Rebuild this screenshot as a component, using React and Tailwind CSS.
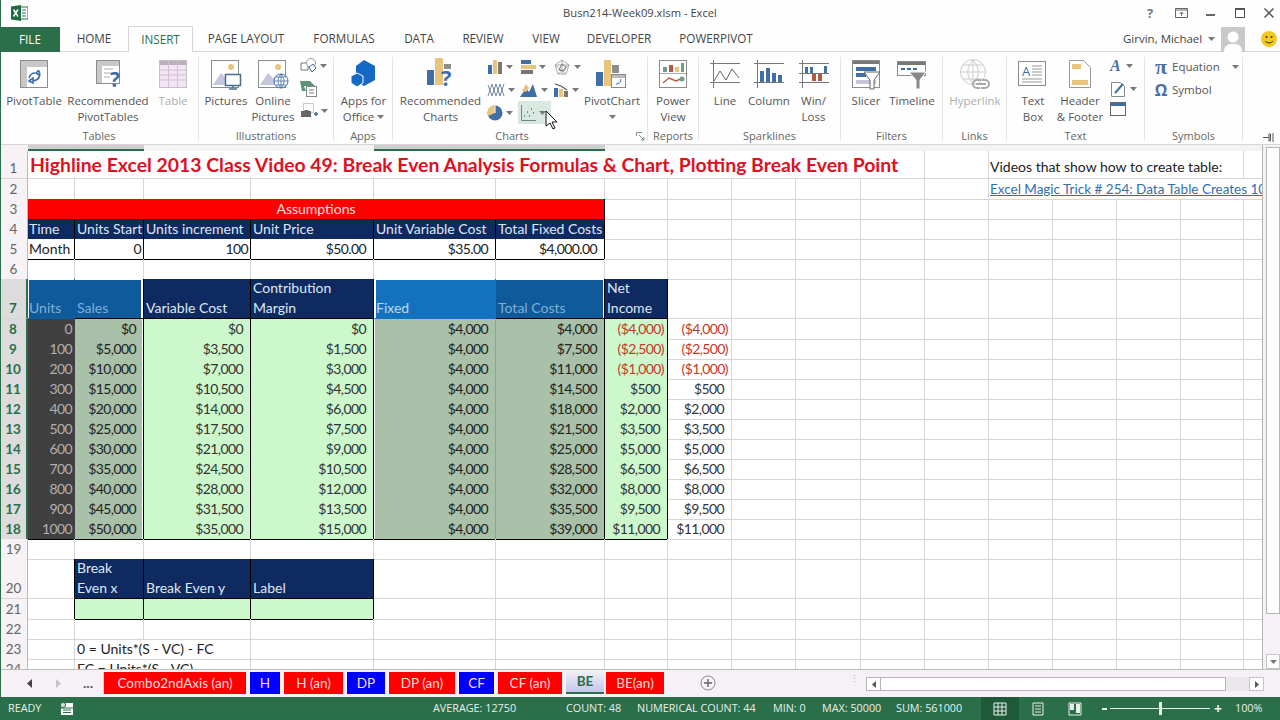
import React from 'react';

const COLS = "grid grid-cols-[28px_47px_69px_107px_123px_122px_109px_63px_64px_64px_65px_64px_64px_64px_64px_64px_63px_19px]";
const BLUE = '#3f6ea8';
const GOLD = '#e8c47c';

const Caret = ({ className = '' }) => (
  <svg width="7" height="4" viewBox="0 0 7 4" className={className}><path d="M0 0h7L3.5 4z" fill="#777" /></svg>
);

// ---------- ribbon icons ----------
const Ico = ({ w = 32, h = 32, children }) => (
  <svg width={w} height={h} viewBox={`0 0 ${w} ${h}`} fill="none">{children}</svg>
);

const PivotIcon = () => (
  <Ico>
    <rect x="2.5" y="2.5" width="27" height="27" fill="#fff" stroke="#8c8c8c" />
    <path d="M3 3h26v6H3zM3 3h6v26H3z" fill="#c8c8c8" />
    <path d="M21 13c2 5 0 9-6 10M11 23l4-3v5zM17 15c-3 0-5 2-6 5M21 12l-3 3 3 2" stroke={BLUE} strokeWidth="1.6" />
  </Ico>
);
const RecPivotIcon = () => (
  <Ico>
    <rect x="4.5" y="2.5" width="23" height="23" fill="#fff" stroke="#8c8c8c" />
    <path d="M5 3h22v5H5zM5 3h5v22H5z" fill="#c8c8c8" />
    <path d="M12 11h9M12 15h6M12 19h6" stroke="#aaa" />
    <text x="18" y="29" fontSize="21" fontWeight="700" fill={BLUE} fontFamily="Open Sans, sans-serif">?</text>
  </Ico>
);
const TableIcon = () => (
  <Ico>
    <rect x="2.5" y="2.5" width="27" height="27" fill="#f3e6f3" stroke="#c9bcc9" />
    <path d="M3 3h26v4H3z" fill="#b9b0b9" />
    <path d="M3 12h26M3 17h26M3 22h26M11.5 3v26M20.5 3v26" stroke="#d7bcd7" />
  </Ico>
);
const PictureBase = ({ children }) => (
  <Ico>
    <rect x="1.5" y="2.5" width="27" height="27" fill="#fff" stroke="#8c8c8c" />
    <circle cx="21" cy="9" r="3" fill={GOLD} />
    <path d="M3 27l8-12 5 5 3-2 6 9z" fill="#c4c6dd" />
    {children}
  </Ico>
);
const PicturesIcon = () => (
  <PictureBase>
    <rect x="15.5" y="16.5" width="15" height="11" fill="#fff" stroke="#4a6e8a" strokeWidth="1.5" />
    <path d="M23 28v2M19 31h8" stroke="#4a6e8a" strokeWidth="1.5" />
  </PictureBase>
);
const OnlinePicturesIcon = () => (
  <PictureBase>
    <circle cx="24" cy="23" r="7" fill="#fff" stroke={BLUE} />
    <path d="M17 23h14M24 16v14M19 19h10M19 27h10M24 16c-4 4-4 10 0 14M24 16c4 4 4 10 0 14" stroke={BLUE} strokeWidth=".8" />
  </PictureBase>
);
const ShapesIcon = () => (
  <Ico w={17} h={16}>
    <path d="M1 5h7v7H1z" stroke="#777" fill="#fff" />
    <circle cx="11" cy="5" r="4.5" stroke="#999" fill="#fff" />
    <path d="M9 9l4-3 3 4-4 4z" stroke={BLUE} fill="#fff" />
  </Ico>
);
const SmartArtIcon = () => (
  <Ico w={17} h={17}>
    <path d="M0 1h10l5 5H4l2 5H2z" fill="#5c9277" />
    <rect x="6.5" y="6.5" width="10" height="10" fill="#fff" stroke="#888" />
    <path d="M9 10h5M9 13h5" stroke="#777" />
  </Ico>
);
const ScreenshotIcon = () => (
  <Ico w={18} h={16}>
    <rect x="3.5" y=".5" width="10" height="9" stroke="#999" strokeDasharray="1 1" />
    <path d="M1 8h3l1-1h3l1 1h2v6H1z" fill="#666" />
    <path d="M14 11h4M16 9v4" stroke={BLUE} strokeWidth="1.6" />
  </Ico>
);
const AppsIcon = () => (
  <Ico w={28} h={28}>
    <path d="M14 0l11 6v14l-11 6-2-1v-9l-6-3V6z" fill="#1469c7" />
    <path d="M7 13l6 3v7l-6 4-6-4v-7z" fill="#1469c7" stroke="#fff" />
  </Ico>
);
const RecChartsIcon = () => (
  <Ico w={30} h={34}>
    <rect x="1" y="13" width="7" height="15" fill={BLUE} />
    <rect x="9" y="1" width="8" height="27" fill={GOLD} />
    <rect x="18" y="7" width="7" height="5" fill="#8e8e8e" />
    <text x="15" y="29" fontSize="22" fontWeight="700" fill={BLUE} fontFamily="Open Sans, sans-serif">?</text>
  </Ico>
);
const PivotChartIcon = () => (
  <Ico w={32} h={32}>
    <rect x="0" y="14" width="7" height="14" fill={BLUE} />
    <rect x="8" y="2" width="7" height="26" fill={GOLD} />
    <rect x="16" y="7" width="7" height="8" fill="#8e8e8e" />
    <rect x="15.5" y="16.5" width="14" height="13" fill="#fff" stroke="#888" />
    <path d="M16 17h13v3H16z" fill="#bbb" />
    <path d="M25 21c0 3-2 5-5 5" stroke={BLUE} />
  </Ico>
);
const PowerViewIcon = () => (
  <Ico>
    <rect x="2.5" y="2.5" width="27" height="27" fill="#fff" stroke="#8c8c8c" />
    <path d="M3 15.5h26" stroke="#aaa" />
    <rect x="6" y="9" width="4" height="5" fill="#6f9c8a" />
    <rect x="12" y="7" width="4" height="7" fill="#b35a45" />
    <rect x="18" y="9" width="4" height="5" fill={GOLD} />
    <rect x="24" y="5" width="3" height="9" fill="#6f9c8a" />
    <path d="M6 25l6-5 7 3 7-3" stroke="#b35a45" strokeWidth="1.4" />
    <circle cx="25" cy="21" r="2.5" fill="#6f9c8a" />
  </Ico>
);
const SparkFrame = ({ children }) => (
  <Ico w={32} h={30}>
    <path d="M1 4.5h30M1 23.5h30M4.5 1v28" stroke="#777" />
    {children}
  </Ico>
);
const SparkLine = () => (
  <SparkFrame><path d="M5 22l6-10 6 9 6-11 7 9" stroke="#666" /></SparkFrame>
);
const SparkColumn = () => (
  <SparkFrame>
    <rect x="7" y="12" width="4" height="11" fill={BLUE} />
    <rect x="13" y="9" width="4" height="14" fill={BLUE} />
    <rect x="19" y="14" width="4" height="9" fill={BLUE} />
    <rect x="25" y="16" width="4" height="7" fill={BLUE} />
  </SparkFrame>
);
const SparkWin = () => (
  <Ico w={32} h={30}>
    <path d="M1 4.5h30M1 23.5h30M4.5 1v28M1 14.5h30" stroke="#777" />
    <rect x="7" y="8" width="3" height="6" fill={BLUE} />
    <rect x="12" y="8" width="3" height="6" fill={BLUE} />
    <rect x="14" y="15" width="4" height="7" fill="#b35a45" />
    <rect x="20" y="15" width="4" height="7" fill="#b35a45" />
    <rect x="26" y="7" width="3" height="7" fill={BLUE} />
  </Ico>
);
const SlicerIcon = () => (
  <Ico>
    <rect x="2.5" y="2.5" width="27" height="27" fill="#fff" stroke="#8c8c8c" />
    <path d="M3 3h26v3H3z" fill="#777" />
    <rect x="6" y="9" width="20" height="4" fill={BLUE} />
    <rect x="6" y="15" width="10" height="4" fill={BLUE} />
    <rect x="6" y="22" width="20" height="4" fill="#c4c6dd" />
    <path d="M14 14h16l-6 8v9h-4v-9z" fill="#fff" stroke="#666" />
  </Ico>
);
const TimelineIcon = () => (
  <Ico>
    <rect x="1.5" y="3.5" width="28" height="14" fill="#fff" stroke="#8c8c8c" />
    <path d="M2 4h27v3H2z" fill="#777" />
    <path d="M5 11h4M11 11h4M17 11h4" stroke={BLUE} strokeWidth="2" />
    <path d="M13 14h17l-6 8v9h-4v-9z" fill="#888" stroke="#fff" />
  </Ico>
);
const HyperlinkIcon = () => (
  <Ico w={34} h={32}>
    <circle cx="15" cy="14" r="12.5" stroke="#ccc" />
    <path d="M3 14h24M15 2v24M5 7h20M5 21h20M15 2c-7 7-7 17 0 24M15 2c7 7 7 17 0 24" stroke="#ccc" />
    <path d="M18 26h10M22 30h-3a4 4 0 010-8h4M24 22h3a4 4 0 010 8h-4" stroke="#aaa" strokeWidth="2" />
  </Ico>
);
const TextBoxIcon = () => (
  <Ico>
    <rect x="1.5" y="3.5" width="27" height="24" fill="#fff" stroke="#8c8c8c" />
    <text x="5" y="18" fontSize="13" fill={BLUE} fontFamily="Open Sans, sans-serif">A</text>
    <path d="M15 8h10M15 11h10M15 14h10M15 17h10M5 21h20M5 24h20" stroke="#999" />
  </Ico>
);
const HeaderIcon = () => (
  <Ico w={24} h={30}>
    <path d="M1.5 1.5h14l7 7v20h-21z" fill="#fff" stroke="#999" />
    <rect x="4" y="5" width="9" height="5" fill={GOLD} />
    <rect x="4" y="21" width="16" height="5" fill={GOLD} />
  </Ico>
);

const chartIcons = {
  column: <Ico w={16} h={16}><rect x="1" y="6" width="4" height="9" fill={BLUE} /><rect x="6" y="1" width="4" height="14" fill={GOLD} /><rect x="11" y="3" width="4" height="12" fill="#777" /></Ico>,
  bar: <Ico w={16} h={16}><rect x="1" y="1" width="10" height="4" fill={BLUE} /><rect x="1" y="6" width="15" height="4" fill={GOLD} /><rect x="1" y="11" width="12" height="4" fill="#777" /></Ico>,
  radar: <Ico w={18} h={16}><path d="M9 1l7 5-3 9H5L2 6zM9 1v14M2 6l14 0M5 15l11-9M13 15L2 6" stroke="#999" strokeWidth=".8" /><path d="M9 5l4 3-2 4-5-1z" stroke="#777" /></Ico>,
  line: <Ico w={18} h={16}><path d="M1 14L5 2l4 12 4-12 4 12" stroke="#888" /><path d="M1 3l4 11 4-12 4 12 4-12" stroke={BLUE} strokeWidth=".8" /></Ico>,
  area: <Ico w={18} h={16}><path d="M0 15l6-9 3 4 4-8 4 13z" fill={BLUE} /><path d="M2 9l4-7 3 4-3 4z" fill={GOLD} /></Ico>,
  combo: <Ico w={16} h={16}><rect x="1" y="6" width="4" height="9" fill={BLUE} /><rect x="6" y="7" width="4" height="8" fill={GOLD} /><rect x="11" y="9" width="4" height="6" fill="#777" /><path d="M2 2l6 2 6 4" stroke="#555" strokeWidth="1.2" /></Ico>,
  pie: <Ico w={16} h={16}><circle cx="8" cy="8" r="7.5" fill={BLUE} /><path d="M8 8V.5A7.5 7.5 0 001 11z" fill={GOLD} /><path d="M8 8V.5" stroke="#fff" /></Ico>,
  scatter: <Ico w={16} h={16}><path d="M1.5 0v15.5H16" stroke="#6a8a7c" /><path d="M4 11h1M7 7h1M9 11h1M11 4h1M13 8h1" stroke="#3f6e8a" strokeWidth="1.4" /></Ico>,
};

// ---------- ribbon pieces ----------
const Big = ({ w, icon, lines, caret, grey }) => (
  <div className={`${w} flex flex-col items-center shrink-0`}>
    <div className="h-[32px] w-full flex items-center justify-center">{icon}</div>
    <div className={`mt-[3px] text-center leading-4 text-[11.5px] whitespace-nowrap ${grey ? 'text-[#aeaeae]' : 'text-[#555]'}`}>
      {lines.map((l, i) => (
        <div key={i} className="flex items-center justify-center gap-[3px] h-4">
          {l}
          {caret && i === lines.length - 1 && <Caret />}
        </div>
      ))}
    </div>
  </div>
);

const Group = ({ w, label, labelClass = '', children }) => (
  <div className={`${w} h-[84px] shrink-0 border-r border-[#e4e4e4] flex flex-col`}>
    <div className="h-[71px] shrink-0 pt-[1px] flex">{children}</div>
    <div className={`h-4 text-center text-[11px] leading-4 text-[#666] ${labelClass}`}>{label}</div>
  </div>
);

const SmallChart = ({ icon, active }) => (
  <div className={`w-[33px] h-[23px] flex items-center gap-[3px] pl-[2px] ${active ? 'bg-[#d9e9e2]' : ''}`}>
    {icon}
    <Caret />
  </div>
);

const Ribbon = () => (
  <div className="h-[93px] bg-[#fefefe] border-b border-[#d6d6d6] flex pt-[5px] text-[#555] relative">
    <Group w="w-[199px]" label="Tables">
      <Big w="w-[68px]" icon={<PivotIcon />} lines={['PivotTable']} />
      <Big w="w-[80px]" icon={<RecPivotIcon />} lines={['Recommended', 'PivotTables']} />
      <Big w="w-[50px]" icon={<TableIcon />} lines={['Table']} grey />
    </Group>
    <Group w="w-[135px]" label="Illustrations">
      <Big w="w-[54px]" icon={<PicturesIcon />} lines={['Pictures']} />
      <Big w="w-[40px]" icon={<OnlinePicturesIcon />} lines={['Online', 'Pictures']} />
      <div className="flex flex-col gap-[5px] pl-[7px]">
        <div className="flex items-center gap-[3px] h-[16px]"><ShapesIcon /><Caret /></div>
        <div className="flex items-center gap-[3px] h-[18px]"><SmartArtIcon /></div>
        <div className="flex items-center gap-[3px] h-[17px]"><ScreenshotIcon /><Caret /></div>
      </div>
    </Group>
    <Group w="w-[59px]" label="Apps">
      <Big w="w-[59px]" icon={<AppsIcon />} lines={['Apps for', 'Office']} caret />
    </Group>
    <Group w="w-[255px]" label="Charts" labelClass="pr-[16px]">
      <Big w="w-[95px]" icon={<RecChartsIcon />} lines={['Recommended', 'Charts']} />
      <div className="w-[99px] -ml-[3px] -mt-[3px] grid grid-cols-3 content-start">
        <SmallChart icon={chartIcons.column} />
        <SmallChart icon={chartIcons.bar} />
        <SmallChart icon={chartIcons.radar} />
        <SmallChart icon={chartIcons.line} />
        <SmallChart icon={chartIcons.area} />
        <SmallChart icon={chartIcons.combo} />
        <SmallChart icon={chartIcons.pie} />
        <SmallChart icon={chartIcons.scatter} active />
      </div>
      <Big w="w-[56px]" icon={<PivotChartIcon />} lines={['PivotChart', <Caret key="c" />]} />
    </Group>
    <Group w="w-[51px]" label="Reports">
      <Big w="w-[50px]" icon={<PowerViewIcon />} lines={['Power', 'View']} />
    </Group>
    <Group w="w-[142px]" label="Sparklines">
      <Big w="w-[52px]" icon={<SparkLine />} lines={['Line']} />
      <Big w="w-[36px]" icon={<SparkColumn />} lines={['Column']} />
      <Big w="w-[53px]" icon={<SparkWin />} lines={['Win/', 'Loss']} />
    </Group>
    <Group w="w-[102px]" label="Filters">
      <Big w="w-[50px]" icon={<SlicerIcon />} lines={['Slicer']} />
      <Big w="w-[42px]" icon={<TimelineIcon />} lines={['Timeline']} />
    </Group>
    <Group w="w-[64px]" label="Links">
      <Big w="w-[64px]" icon={<HyperlinkIcon />} lines={['Hyperlink']} grey />
    </Group>
    <Group w="w-[138px]" label="Text">
      <Big w="w-[52px]" icon={<TextBoxIcon />} lines={['Text', 'Box']} />
      <Big w="w-[42px]" icon={<HeaderIcon />} lines={['Header', '& Footer']} />
      <div className="flex flex-col pl-[9px] gap-[3px] -mt-[2px]">
        <div className="flex items-center gap-[5px] h-[20px]">
          <span className="text-[16px] font-bold italic text-[#4c6fa5] font-['Liberation_Serif',serif]">A</span><Caret />
        </div>
        <div className="flex items-center gap-[3px] h-[20px]">
          <Ico w={17} h={17}><path d="M1.5 1.5h9l4 4v10h-13z" fill="#fff" stroke="#888" /><path d="M5 12l8-9" stroke={BLUE} strokeWidth="2" /></Ico><Caret />
        </div>
        <Ico w={17} h={15}><rect x=".5" y=".5" width="15" height="13" fill="#fff" stroke="#666" /><path d="M1 1h14v3H1z" fill={BLUE} /></Ico>
      </div>
    </Group>
    <Group w="w-[98px]" label="Symbols">
      <div className="pl-[9px] -mt-[3px] text-[11.5px] leading-[23px] text-[#555]">
        <div className="flex items-center gap-[4px] whitespace-nowrap h-[23px]">
          <span className="w-[14px] text-center text-[22px] leading-none text-[#4c6fa5] font-['Liberation_Serif',serif] font-bold">π</span>Equation
          <Caret className="ml-[8px]" />
        </div>
        <div className="flex items-center gap-[4px] h-[23px]">
          <span className="w-[14px] text-center text-[16px] leading-none text-[#4c6fa5] font-bold">Ω</span>Symbol
        </div>
      </div>
    </Group>
    {/* dialog launcher + pin */}
    <svg className="absolute left-[636px] top-[80px]" width="9" height="9" viewBox="0 0 9 9" fill="none"><path d="M.5 4V.5H6M3 3l5 5M8 5v3H5" stroke="#888" /></svg>
    <svg className="absolute left-[1263px] top-[81px]" width="11" height="9" viewBox="0 0 11 9" fill="none"><path d="M0 4.5h6M6 1v7h1.5V1zM10 0v9" stroke="#555" /></svg>
  </div>
);

// ---------- sheet ----------
const NAVY = 'bg-[#0f2a60] text-[#dfe8f5] border-black';
const TBL = 'bg-white text-[#222] border-black';
const GREEN = 'bg-[#ccf8cc] text-[#333] border-black';
const SAGE = 'bg-[#a9c1a9] text-[#222] border-black';
const UNDER = 'border-[#d6d6d6] border-b-black';
const EDGE = 'border-[#d6d6d6] border-r-black';

const c = (t, cls = '', extra = {}) => ({ t, cls, ...extra });
// numbers: Lato's digits run wider than the sheet font's
const R2 = 'justify-end pr-[2px] tracking-[-0.6px]';
const R7 = 'justify-end pr-[7px] tracking-[-0.6px]';
const R3 = 'justify-end pr-[3px] tracking-[-0.6px]';

const Row = ({ n, h = 'h-5', sel, cells = [] }) => {
  const used = cells.reduce((s, x) => s + (x.span || 1), 0);
  const blanks = Array.from({ length: Math.max(0, 17 - used) }, () => c(''));
  return (
    <div className={`${COLS} ${h}`}>
      <div className={`flex items-end justify-center leading-5 text-[13.5px] border-b border-[#d6d6d6] ${sel ? 'bg-[#dcdcdc] text-[#2a6e4a] font-bold border-r-2 border-r-[#2a6e4a]' : 'bg-[#f6f2f6] text-[#666] border-r border-r-[#b9b9b9]'}`}>{n}</div>
      {[...cells, ...blanks].map((x, i) => (
        <div
          key={i}
          className={`flex items-end whitespace-pre-line leading-5 overflow-hidden border-r border-b ${x.cls.includes('border-') ? '' : 'border-[#d6d6d6]'} ${x.cls.includes('justify') || x.cls.includes('pl-[') ? '' : 'pl-[2px]'} ${x.cls} ${x.span === 2 ? 'col-span-2' : ''} ${x.span === 4 ? 'col-span-4' : ''} ${x.span === 5 ? 'col-span-5' : ''} ${x.span === 6 ? 'col-span-6' : ''} ${x.span === 11 ? 'col-span-11' : ''}`}
        >
          {x.t}
        </div>
      ))}
    </div>
  );
};

const DATA = [
  [8, '0', '$0', '$0', '$0', '$4,000', '$4,000', '($4,000)', '($4,000)'],
  [9, '100', '$5,000', '$3,500', '$1,500', '$4,000', '$7,500', '($2,500)', '($2,500)'],
  [10, '200', '$10,000', '$7,000', '$3,000', '$4,000', '$11,000', '($1,000)', '($1,000)'],
  [11, '300', '$15,000', '$10,500', '$4,500', '$4,000', '$14,500', '$500', '$500'],
  [12, '400', '$20,000', '$14,000', '$6,000', '$4,000', '$18,000', '$2,000', '$2,000'],
  [13, '500', '$25,000', '$17,500', '$7,500', '$4,000', '$21,500', '$3,500', '$3,500'],
  [14, '600', '$30,000', '$21,000', '$9,000', '$4,000', '$25,000', '$5,000', '$5,000'],
  [15, '700', '$35,000', '$24,500', '$10,500', '$4,000', '$28,500', '$6,500', '$6,500'],
  [16, '800', '$40,000', '$28,000', '$12,000', '$4,000', '$32,000', '$8,000', '$8,000'],
  [17, '900', '$45,000', '$31,500', '$13,500', '$4,000', '$35,500', '$9,500', '$9,500'],
  [18, '1000', '$50,000', '$35,000', '$15,000', '$4,000', '$39,000', '$11,000', '$11,000'],
];

const Sheet = () => (
  <div className="h-[524px] flex bg-white">
    <div className="w-[1263px] overflow-hidden border-r border-[#b5b5b5] font-[Lato,sans-serif] text-[14px] text-[#222]">
      {/* column header strip, mostly hidden behind the ribbon */}
      <div className={`${COLS} h-[6px]`}>
        <div className="bg-[#f6f2f6]" />
        <div className="col-span-2 bg-[#cfcfcf] border-b-2 border-[#2a6e4a]" />
        <div className="col-span-2 bg-[#f3f3f3]" />
        <div className="col-span-2 bg-[#cfcfcf] border-b-2 border-[#2a6e4a]" />
        <div className="col-span-11 bg-[#f3f3f3]" />
      </div>
      <Row n="1" h="h-[28px]" cells={[
        c('Highline Excel 2013 Class Video 49: Break Even Analysis Formulas & Chart, Plotting Break Even Point', "text-[19.4px] font-bold text-[#e0101e] items-center pl-[2px] pb-[3px]", { span: 11 }),
        c(''),
        c('Videos that show how to create table:', 'pl-[1px] pb-[1px]', { span: 4 }),
      ]} />
      <Row n="2" cells={[
        c('', UNDER), c('', UNDER), c('', UNDER), c('', UNDER), c('', UNDER), c('', UNDER),
        c(''), c(''), c(''), c(''), c(''), c(''),
        c(<span className="underline text-[13.5px] text-[#2f6eb0] whitespace-nowrap">Excel Magic Trick # 254: Data Table Creates 100 Formulas</span>, 'pl-[1px]', { span: 5 }),
      ]} />
      <Row n="3" cells={[c('Assumptions', 'bg-[#ff0000] text-[#f8e0e0] justify-center border-black', { span: 6 })]} />
      <Row n="4" cells={['Time', 'Units Start', 'Units increment', 'Unit Price', 'Unit Variable Cost', 'Total Fixed Costs'].map((t, i) => c(t, i === 0 ? `${NAVY} pl-[1px]` : NAVY))} />
      <Row n="5" cells={[
        c('Month', `${TBL} pl-[1px]`), c('0', `${TBL} ${R2}`), c('100', `${TBL} ${R2}`),
        c('$50.00', `${TBL} ${R7}`), c('$35.00', `${TBL} ${R7}`), c('$4,000.00', `${TBL} ${R7}`),
      ]} />
      <Row n="6" cells={Array.from({ length: 7 }, () => c('', UNDER))} />
      <Row n="7" h="h-10" sel cells={[
        c('Units', 'bg-[#0f5a9a] text-[#7fb0d6] border-[#0f5a9a] pl-[1px] shadow-[inset_1px_1px_0_#fff]'),
        c('Sales', 'bg-[#0f5a9a] text-[#7fb0d6] border-black shadow-[inset_-2px_1px_0_#fff]'),
        c('Variable Cost', NAVY),
        c('Contribution\nMargin', NAVY),
        c('Fixed', 'bg-[#1272bf] text-[#bcd8ee] border-[#1272bf] shadow-[inset_2px_1px_0_#fff]'),
        c('Total Costs', 'bg-[#0f5a9a] text-[#7fb0d6] border-black shadow-[inset_-1px_1px_0_#fff]'),
        c('Net\nIncome', NAVY),
      ]} />
      {DATA.map(([n, u, s, v, m, f, t, ni, x]) => {
        const neg = ni.startsWith('(');
        const pad = neg ? R3 : R7;
        return (
          <Row key={n} n={String(n)} sel cells={[
            c(u, `bg-[#404040] text-[#b0b0b0] border-b-black border-r-[#404040] ${R2}`),
            c(s, `${SAGE} ${R7} shadow-[inset_-1px_0_0_#fff]`),
            c(v, `${GREEN} ${R7}`),
            c(m, `${GREEN} ${R7}`),
            c(f, `bg-[#a9c1a9] text-[#222] border-b-black border-r-[#8fa58f] ${R7} shadow-[inset_1px_0_0_#fff]`),
            c(t, `${SAGE} ${R7}`),
            c(ni, `bg-[#ccf8cc] border-black ${neg ? 'text-[#c0392b]' : 'text-[#333]'} ${pad}`),
            c(x, `${neg ? 'text-[#c0392b]' : 'text-[#333]'} ${pad}`),
          ]} />
        );
      })}
      <Row n="19" />
      <Row n="20" h="h-10" cells={[
        c('', EDGE),
        c('Break\nEven x', NAVY), c('Break Even y', NAVY), c('Label', NAVY),
      ]} />
      <Row n="21" cells={[c('', EDGE), c('', GREEN), c('', GREEN), c('', GREEN)]} />
      <Row n="22" />
      <Row n="23" cells={[c(''), c('0 = Units*(S - VC) - FC', '', { span: 2 })]} />
      <Row n="24" cells={[c(''), c('FC = Units*(S - VC)', '', { span: 2 })]} />
    </div>
    {/* vertical scroll bar */}
    <div className="flex-1 bg-[#f6f1f6] flex flex-col items-end">
      <div className="mt-[2px] w-[14px] h-[467px] bg-white border border-[#b5b5b5]" />
      <div className="flex-1" />
      <div className="w-[14px] h-[15px] bg-white border border-[#c4c4c4] flex items-center justify-center">
        <Caret />
      </div>
    </div>
  </div>
);

// ---------- tabs + status bar ----------
const SheetTab = ({ w, bg, children }) => (
  <div className={`${w} ${bg} h-[22px] mr-[4px] shrink-0 flex items-center justify-center text-[13.5px] text-[#fbdcdc] whitespace-nowrap`}>{children}</div>
);

const SheetTabs = () => (
  <div className="h-[28px] bg-[#f6f1f6] border-t border-[#bdbdbd] flex items-start pt-[2px] font-[Lato,sans-serif] relative">
    <div className="w-[104px] h-[22px] shrink-0 flex items-center text-[#555] border-r border-[#d0d0d0] mr-[0px]">
      <svg className="ml-[27px]" width="5" height="9" viewBox="0 0 5 9"><path d="M5 0v9L0 4.500z" fill="#444" /></svg>
      <svg className="ml-[24px]" width="5" height="9" viewBox="0 0 5 9"><path d="M0 0v9l5-4.500z" fill="#c4c4c4" /></svg>
      <span className="ml-[22px] font-bold text-[14px] leading-none">...</span>
    </div>
    <SheetTab w="w-[142px]" bg="bg-[#ff0000]">Combo2ndAxis (an)</SheetTab>
    <SheetTab w="w-[30px]" bg="bg-[#0000ff]">H</SheetTab>
    <SheetTab w="w-[59px]" bg="bg-[#ff0000]">H (an)</SheetTab>
    <SheetTab w="w-[38px]" bg="bg-[#0000ff]">DP</SheetTab>
    <SheetTab w="w-[66px]" bg="bg-[#ff0000]">DP (an)</SheetTab>
    <SheetTab w="w-[35px]" bg="bg-[#0000ff]">CF</SheetTab>
    <SheetTab w="w-[64px]" bg="bg-[#ff0000]">CF (an)</SheetTab>
    <div className="w-[38px] h-[24px] -mt-[2px] mr-[2px] shrink-0 flex items-center justify-center text-[13.5px] font-bold text-[#2a6e4a] bg-gradient-to-b from-[#f6f1f6] to-[#c5c5ee] border-b-2 border-[#2a6e4a]">BE</div>
    <SheetTab w="w-[58px]" bg="bg-[#ff0000]">BE(an)</SheetTab>
    <svg className="ml-[32px] mt-[3px]" width="16" height="16" viewBox="0 0 16 16" fill="none"><circle cx="8" cy="8" r="7" stroke="#888" /><path d="M8 4v8M4 8h8" stroke="#666" strokeWidth="1.4" /></svg>
    <div className="ml-[134px] mt-[4px] text-[#aaa] text-[9px] leading-[6px] w-[16px]">⋮</div>
    {/* horizontal scroll bar */}
    <div className="mt-[5px] flex items-stretch h-[14px]">
      <div className="w-[15px] bg-white border border-[#b5b5b5] flex items-center justify-center">
        <svg width="4" height="7" viewBox="0 0 4 7"><path d="M4 0v7L0 3.500z" fill="#555" /></svg>
      </div>
      <div className="w-[345px] bg-white border-y border-r border-[#b5b5b5]" />
      <div className="w-[23px] bg-[#ece7ec]" />
      <div className="w-[15px] bg-white border border-[#c4c4c4] flex items-center justify-center">
        <svg width="4" height="7" viewBox="0 0 4 7"><path d="M0 0v7l4-3.500z" fill="#555" /></svg>
      </div>
    </div>
  </div>
);

const StatusBar = () => (
  <div className="h-[23px] bg-[#2a6e4a] text-[#e8f0ea] text-[10.8px] flex items-center font-['Open_Sans',sans-serif]">
    <span className="ml-[8px] w-[52px]">READY</span>
    <svg width="14" height="14" viewBox="0 0 14 14" fill="none"><rect x="1" y="1" width="12" height="12" fill="#fff" /><path d="M1 6h12M3 8h8M3 10.500h8" stroke="#2a6e4a" /><circle cx="3" cy="3" r="2.600" fill="#cfe1d5" stroke="#2a6e4a" /></svg>
    <span className="ml-[359px] w-[133px]">AVERAGE: 12750</span>
    <span className="w-[71px]">COUNT: 48</span>
    <span className="w-[136px]">NUMERICAL COUNT: 44</span>
    <span className="w-[49px]">MIN: 0</span>
    <span className="w-[74px]">MAX: 50000</span>
    <span className="w-[85px]">SUM: 561000</span>
    <div className="w-[38px] h-[23px] bg-[#1e5a3a] flex items-center justify-center">
      <svg width="14" height="14" viewBox="0 0 14 14" fill="none"><path d="M1 1h12v12H1zM1 5h12M1 9h12M5 1v12M9 1v12" stroke="#e8f0ea" /></svg>
    </div>
    <svg className="ml-[12px]" width="14" height="14" viewBox="0 0 14 14" fill="none"><path d="M2 1h10v12H2zM4 4h6M4 7h6M4 10h6" stroke="#e8f0ea" /></svg>
    <svg className="ml-[23px]" width="14" height="14" viewBox="0 0 14 14" fill="none"><path d="M1 1h12v12H1z" stroke="#e8f0ea" /><path d="M2 2h4v6H2zM8 2h4v9H8z" fill="#e8f0ea" /></svg>
    <div className="ml-[20px] w-[5px] h-[2px] bg-[#e8f0ea]" />
    <div className="relative ml-[3px] w-[100px] h-[1px] bg-[#e8f0ea]">
      <div className="absolute left-[49px] -top-[6px] w-[3px] h-[13px] bg-[#e8f0ea]" />
    </div>
    <span className="ml-[4px] text-[14px] font-bold leading-none">+</span>
    <span className="ml-[13px]">100%</span>
  </div>
);

const TABS = [
  ['HOME', 'w-[68px]'], ['INSERT', 'w-[65px]'], ['PAGE LAYOUT', 'w-[106px]'], ['FORMULAS', 'w-[90px]'],
  ['DATA', 'w-[60px]'], ['REVIEW', 'w-[68px]'], ['VIEW', 'w-[58px]'], ['DEVELOPER', 'w-[88px]'], ['POWERPIVOT', 'w-[106px]'],
];

export default function App() {
  return (
    <div className="relative w-[1280px] h-[720px] overflow-hidden bg-white font-['Open_Sans',sans-serif]">
      {/* title bar */}
      <div className="h-[26px] bg-[#fefefe] flex items-center relative">
        <svg className="ml-[11px]" width="17" height="16" viewBox="0 0 17 16" fill="none">
          <rect x="8" y="2" width="9" height="12" fill="#fff" stroke="#2a6e4a" />
          <path d="M11 5h4M11 8h4M11 11h4" stroke="#2a6e4a" />
          <path d="M0 1.500L10 0v16L0 14.500z" fill="#1f6b42" />
          <path d="M2.500 4.500l4.500 7M7 4.500l-4.500 7" stroke="#fff" strokeWidth="1.500" />
        </svg>
        <div className="absolute left-0 right-0 text-center text-[11.2px] text-[#444]">Busn214-Week09.xlsm - Excel</div>
        <div className="absolute left-[1147px] top-[5px] text-[13px] font-bold text-[#777] leading-4">?</div>
        <svg className="absolute left-[1175px] top-[8px]" width="13" height="10" viewBox="0 0 13 10" fill="none"><path d="M.5.500h12v9H.500zM1 2h11M6.500 8V4M4.500 6l2-2 2 2" stroke="#666" /></svg>
        <div className="absolute left-[1206px] top-[14px] w-[9px] h-[2px] bg-[#666]" />
        <div className="absolute left-[1235px] top-[8px] w-[10px] h-[10px] border border-t-2 border-[#555]" />
        <svg className="absolute left-[1264px] top-[8px]" width="10" height="10" viewBox="0 0 10 10" fill="none"><path d="M.5.500l9 9M9.500.500l-9 9" stroke="#555" strokeWidth="1.500" /></svg>
      </div>
      {/* ribbon tabs */}
      <div className="h-[26px] bg-[#fefefe] flex border-b border-[#d6d6d6] relative">
        <div className="w-[60px] h-[25px] mt-[1px] bg-[#2a6e4a] text-white text-[11.7px] flex items-center justify-center">FILE</div>
        {TABS.map(([t, w]) => (
          <div
            key={t}
            className={`${w} h-[26px] text-[11.7px] flex items-center justify-center ${t === 'INSERT' ? 'bg-[#fefefe] border-x border-t border-[#d6d6d6] text-[#2a6e4a]' : 'text-[#444]'}`}
          >
            {t}
          </div>
        ))}
        <div className="absolute left-[1123px] top-0 h-[25px] flex items-center text-[11.5px] text-[#444]">
          Girvin, Michael
          <Caret className="ml-[6px]" />
        </div>
        <svg className="absolute left-[1221px] top-[1px]" width="24" height="25" viewBox="0 0 24 25"><rect width="24" height="25" fill="#c9c9c9" /><circle cx="12" cy="10" r="5.500" fill="#fff" /><path d="M3 25c0-7 4-8 9-8s9 1 9 8z" fill="#fff" /></svg>
        <svg className="absolute left-[1261px] top-[5px]" width="16" height="16" viewBox="0 0 16 16"><circle cx="8" cy="8" r="8" fill="#f2c81e" /><circle cx="5.500" cy="6" r="1" fill="#333" /><circle cx="10.500" cy="6" r="1" fill="#333" /><path d="M4 10c2 2.500 6 2.500 8 0" stroke="#333" fill="none" /></svg>
      </div>
      <Ribbon />
      <Sheet />
      <SheetTabs />
      <StatusBar />
      {/* window edge */}
      <div className="absolute left-0 top-0 w-[1px] h-full bg-[#2a6e4a]" />
      {/* mouse pointer */}
      <svg className="absolute left-[545px] top-[110px]" width="13" height="20" viewBox="0 0 13 20"><path d="M1 1v15l4-3 3 6 2-1-3-6h5z" fill="#fff" stroke="#111" /></svg>
    </div>
  );
}
